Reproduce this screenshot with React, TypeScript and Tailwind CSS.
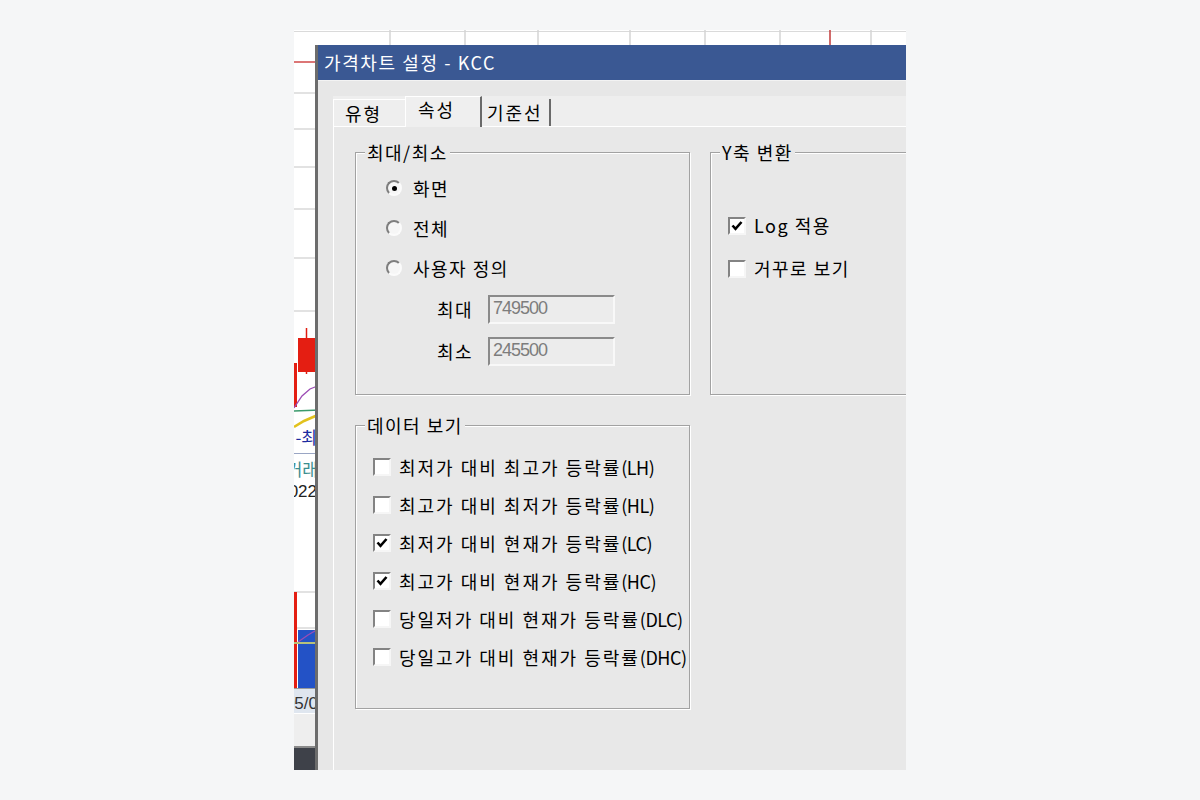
import type { ReactNode } from "react";

const dataRows = [
  { ko: "최저가 대비 최고가 등락률", en: "(LH)", checked: false },
  { ko: "최고가 대비 최저가 등락률", en: "(HL)", checked: false },
  { ko: "최저가 대비 현재가 등락률", en: "(LC)", checked: true },
  { ko: "최고가 대비 현재가 등락률", en: "(HC)", checked: true },
  { ko: "당일저가 대비 현재가 등락률", en: "(DLC)", checked: false },
  { ko: "당일고가 대비 현재가 등락률", en: "(DHC)", checked: false },
];

function ChartBackdrop() {
  const hLines = [63, 99, 137, 179, 228, 281, 562, 598];
  const vLines = [96, 171, 244, 336, 411, 486, 577];
  return (
    <svg className="absolute inset-0 h-full w-full" viewBox="0 0 612 740" aria-hidden="true">
      <rect width="612" height="740" fill="#ffffff" />
      <line x1="0" y1="1.5" x2="612" y2="1.5" stroke="#dadada" />
      {vLines.map((x) => (
        <line key={x} x1={x} y1="0" x2={x} y2="20" stroke="#d4d4d4" strokeWidth="1.5" />
      ))}
      <line x1="536" y1="0" x2="536" y2="20" stroke="#c23a3a" strokeWidth="1.5" />
      <line x1="0" y1="32" x2="30" y2="32" stroke="#d04848" strokeWidth="1.5" />
      {hLines.map((y) => (
        <line key={y} x1="0" y1={y} x2="30" y2={y} stroke="#d8d8d8" strokeWidth="1.5" />
      ))}
      {/* candles */}
      <line x1="12.5" y1="298" x2="12.5" y2="344" stroke="#e01c10" strokeWidth="1.5" />
      <rect x="4" y="308" width="22" height="34" fill="#e41e12" />
      <rect x="0" y="333" width="3" height="44" fill="#e41e12" />
      <polyline points="0,378 8,366 16,359 26,355" fill="none" stroke="#9c4cb4" strokeWidth="1.3" />
      <line x1="0" y1="381" x2="26" y2="380" stroke="#3a9a6c" strokeWidth="1.5" />
      <polyline points="0,397 10,391 26,384" fill="none" stroke="#e2c21e" strokeWidth="2.6" />
      <text x="23" y="414" textAnchor="end" fontSize="17" fill="#1c2ca0" fontFamily="Noto Sans CJK KR, sans-serif">
        -최
      </text>
      <line x1="0" y1="423.5" x2="30" y2="423.5" stroke="#9aa6c4" />
      <text x="24" y="446" textAnchor="end" fontSize="17" fill="#3b8e90" fontFamily="Noto Sans CJK KR, sans-serif">
        거래
      </text>
      <text x="23" y="467" textAnchor="end" fontSize="17" fill="#222222" fontFamily="Liberation Sans, sans-serif">
        2022
      </text>
      {/* lower volume area */}
      <rect x="0" y="562" width="3" height="96" fill="#e41e12" />
      <rect x="4" y="600" width="22" height="58" fill="#2352c6" />
      <polyline points="4,612 14,605 26,598" fill="none" stroke="#9c4cb4" strokeWidth="1.3" />
      <line x1="0" y1="613" x2="26" y2="613" stroke="#b6c07a" strokeWidth="2" />
      <line x1="0" y1="658.5" x2="30" y2="658.5" stroke="#9a9a9a" />
      <rect x="0" y="659" width="30" height="24" fill="#dfe6ef" />
      <text x="24" y="679" textAnchor="end" fontSize="17" fill="#333333" fontFamily="Liberation Sans, sans-serif">
        05/0
      </text>
      <rect x="0" y="684" width="30" height="32" fill="#eeeeee" />
      <line x1="0" y1="717" x2="30" y2="717" stroke="#8a8a8a" strokeWidth="2" />
      <rect x="0" y="718" width="30" height="22" fill="#3e4149" />
    </svg>
  );
}

function CheckBox({ checked }: { checked?: boolean }) {
  return (
    <span className="flex h-[18px] w-[18px] shrink-0 items-center justify-center border-2 border-t-[#838383] border-l-[#838383] border-r-[#f6f6f6] border-b-[#f6f6f6] bg-white">
      {checked && (
        <svg viewBox="0 0 14 14" className="h-[14px] w-[14px]" aria-hidden="true">
          <path d="M2.5 6.5 L5.5 9.8 L11.5 3" fill="none" stroke="#000000" strokeWidth="2.6" />
        </svg>
      )}
    </span>
  );
}

function Radio({ checked }: { checked?: boolean }) {
  return (
    <span className="flex h-[16px] w-[16px] shrink-0 items-center justify-center rounded-full border-2 border-t-[#7e7e7e] border-l-[#7e7e7e] border-r-[#fbfbfb] border-b-[#fbfbfb] bg-[#f6f6f6]">
      {checked && <span className="h-[5px] w-[5px] rounded-full bg-black" />}
    </span>
  );
}

function NumberBox({ value }: { value: string }) {
  return (
    <div className="h-[29px] w-[127px] border-2 border-t-[#8a8a8a] border-l-[#8a8a8a] border-r-[#f8f8f8] border-b-[#f8f8f8] bg-[#ececec] pl-[3px] font-['Liberation_Sans',sans-serif] text-[18px] leading-[22px] tracking-[-1px] text-[#7d7d7d]">
      {value}
    </div>
  );
}

function GroupBox({ title, className, children }: { title: string; className: string; children: ReactNode }) {
  return (
    <fieldset
      className={`min-w-0 border border-[#a2a2a2] shadow-[inset_1px_1px_0_#ffffff,1px_1px_0_#ffffff] ${className}`}
    >
      <legend className="ml-[9px] bg-[#e8e8e8] px-[2px] text-[18px] leading-[20px] tracking-[1.5px]">{title}</legend>
      {children}
    </fieldset>
  );
}

export default function App() {
  return (
    <div className="flex h-[800px] w-full items-center justify-center bg-[#f5f6f7] font-['Noto_Sans_CJK_KR',sans-serif] text-black">
      <div className="relative h-[740px] w-[612px] overflow-hidden bg-white">
        <ChartBackdrop />

        <div className="absolute left-[21px] top-[15px] flex h-[760px] w-[640px] flex-col border-l-[3px] border-[#6c6c6c]">
          <div className="flex h-[35px] shrink-0 items-center bg-[#3a5893] pl-[6px] text-[18px] tracking-[1.6px] text-white">
            가격차트 설정 - KCC
          </div>

          <div className="flex flex-1 flex-col border-t border-[#f3f3f3] bg-[#e7e7e7] pl-[15px] pt-[15px]">
            <div className="flex h-[30px] shrink-0 items-end bg-[#eeeeee] text-[18px] tracking-[2px]">
              <div className="flex h-[27px] w-[72px] items-center border-l border-t border-white pl-[11px]">유형</div>
              <div className="relative z-10 -mb-px flex h-[31px] w-[77px] items-center border-l border-t border-r-2 border-l-white border-t-white border-r-[#6a6a6a] bg-[#efefef] pb-[5px] pl-[12px]">
                속성
              </div>
              <div className="flex h-[27px] w-[69px] items-center border-r-2 border-r-[#6a6a6a] pl-[5px]">기준선</div>
            </div>

            <div className="flex-1 border-l border-t border-white bg-[#e8e8e8] pl-[21px] pt-[15px] text-[18px] tracking-[1.5px]">
              <div className="grid grid-cols-[335px_245px] gap-x-[20px] gap-y-[20px]">
                <GroupBox title="최대/최소" className="h-[253px]">
                  <div className="flex flex-col pl-[30px] pt-[6px]">
                    <label className="flex h-[40px] items-center gap-[11px]">
                      <Radio checked />
                      화면
                    </label>
                    <label className="flex h-[40px] items-center gap-[11px]">
                      <Radio />
                      전체
                    </label>
                    <label className="flex h-[40px] items-center gap-[11px]">
                      <Radio />
                      사용자 정의
                    </label>
                    <div className="flex h-[42px] items-center pl-[51px]">
                      <span className="w-[51px]">최대</span>
                      <NumberBox value="749500" />
                    </div>
                    <div className="flex h-[42px] items-center pl-[51px]">
                      <span className="w-[51px]">최소</span>
                      <NumberBox value="245500" />
                    </div>
                  </div>
                </GroupBox>

                <GroupBox title="Y축 변환" className="h-[253px]">
                  <div className="flex flex-col pl-[17px] pt-[42px]">
                    <label className="flex h-[43px] items-center gap-[8px]">
                      <CheckBox checked />
                      Log 적용
                    </label>
                    <label className="flex h-[43px] items-center gap-[8px]">
                      <CheckBox />
                      거꾸로 보기
                    </label>
                  </div>
                </GroupBox>

                <GroupBox title="데이터 보기" className="h-[294px]">
                  <div className="flex flex-col pl-[17px] pt-[13px]">
                    {dataRows.map((row) => (
                      <label
                        key={row.en}
                        className="flex h-[38px] items-center gap-[8px] whitespace-nowrap tracking-[2px]"
                      >
                        <CheckBox checked={row.checked} />
                        <span>
                          {row.ko}
                          <span className="tracking-[-0.5px]">{row.en}</span>
                        </span>
                      </label>
                    ))}
                  </div>
                </GroupBox>
              </div>
            </div>
          </div>
        </div>
      </div>
    </div>
  );
}
